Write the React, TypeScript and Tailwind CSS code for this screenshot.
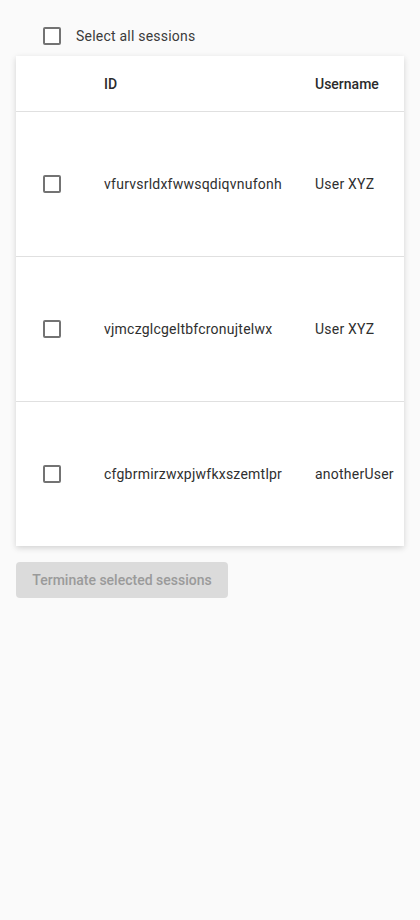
const sessions = [
  { id: "vfurvsrldxfwwsqdiqvnufonh", user: "User XYZ" },
  { id: "vjmczglcgeltbfcronujtelwx", user: "User XYZ" },
  { id: "cfgbrmirzwxpjwfkxszemtlpr", user: "anotherUser" },
];

function Box() {
  return <span className="block w-[18px] h-[18px] rounded-[2px] border-2 border-[#737373] bg-white" />;
}

export default function App() {
  return (
    <div className="min-h-[920px] bg-[#fafafa] px-4 pt-[27px] font-['Roboto',sans-serif] text-sm">
      <label className="flex items-center h-[18px] pl-[27px]">
        <Box />
        <span className="ml-[15px] text-[#3b3b3b] tracking-[0.22px]">Select all sessions</span>
      </label>

      <div className="mt-[11px] bg-white overflow-hidden shadow-[0_2px_6px_rgba(0,0,0,0.16)]">
        <div className="flex items-center h-[56px] pt-px border-b border-[#e0e0e0] font-medium text-[#2b2b2b]">
          <div className="w-[88px] shrink-0" />
          <div className="w-[211px] shrink-0 pl-0">ID</div>
          <div className="shrink-0">Username</div>
        </div>
        {sessions.map((s, i) => (
          <div
            key={s.id}
            className={`flex items-center text-[#2f2f2f] tracking-[0.23px] ${i < sessions.length - 1 ? "h-[145px] border-b border-[#e0e0e0]" : "h-[144px]"}`}
          >
            <div className="w-[88px] shrink-0 pl-[27px]">
              <Box />
            </div>
            <div className="w-[211px] shrink-0">{s.id}</div>
            <div className="shrink-0 whitespace-nowrap">{s.user}</div>
          </div>
        ))}
      </div>

      <button
        disabled
        className="mt-4 h-9 w-[212px] rounded bg-[#dbdbdb] text-[#9a9a9a] font-medium"
      >
        Terminate selected sessions
      </button>
    </div>
  );
}
